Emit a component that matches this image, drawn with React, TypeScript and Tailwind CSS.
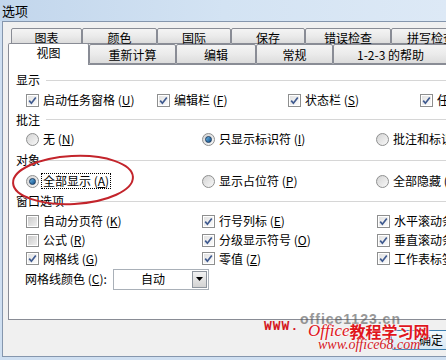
import React from 'react';

const font = "font-['Noto_Sans_CJK_SC',sans-serif]";

const Check = ({ checked }: { checked: boolean }) => (
  <span className="w-[13px] h-[13px] border border-[#8e8f8f] bg-white flex items-center justify-center shrink-0">
    <span
      className={
        checked
          ? 'w-[9px] h-[9px] bg-gradient-to-br from-[#e2e2e2] to-[#fbfbfb] flex items-center justify-center'
          : 'w-[9px] h-[9px] bg-gradient-to-br from-[#cbcbcb] to-[#efefef]'
      }
    >
      {checked && (
        <svg width="9" height="9" viewBox="0 0 9 9">
          <path d="M1.2 4.6 L3.4 7.2 L7.8 1.4" stroke="#3f5a8f" strokeWidth="1.7" fill="none" />
        </svg>
      )}
    </span>
  </span>
);

const Radio = ({ checked }: { checked: boolean }) => (
  <span className="w-[13px] h-[13px] rounded-full border border-[#8e8f8f] bg-gradient-to-br from-[#d4d4d4] to-[#f8f8f8] flex items-center justify-center shrink-0">
    {checked && (
      <span className="w-[7px] h-[7px] rounded-full border border-[#1c3a5e] bg-gradient-to-br from-[#6fb8e6] to-[#0c4f8a]" />
    )}
  </span>
);

const Label = ({ text, k }: { text: string; k: string }) => (
  <span className="whitespace-nowrap">
    {text} (<span className="underline">{k}</span>)
  </span>
);

const Section = ({ title }: { title: string }) => (
  <div className="h-[20px] flex items-center pl-[7px]">
    <span className="text-black">{title}</span>
    <span className="flex-1 h-px bg-[#d6d6d6] ml-[6px]" />
  </div>
);

const Tab = ({ label, w, top }: { label: string; w: string; top?: boolean }) => (
  <div
    className={`${w} h-full shrink-0 border border-[#898c95] rounded-t-[2px] bg-gradient-to-b from-[#f4f4f4] via-[#ebebeb] to-[#dcdcdc] flex items-center justify-center text-black whitespace-nowrap ${top ? 'pt-[3px]' : 'pt-[1px]'}`}
  >
    {label}
  </div>
);

const Cell = ({ w, children }: { w?: string; children: React.ReactNode }) => (
  <div className={`${w ?? ''} shrink-0 flex items-center gap-[4px]`}>{children}</div>
);

export default function App() {
  return (
    <div className={`relative w-[446px] h-[360px] overflow-hidden bg-[#cfdff1] text-[12px] leading-none ${font}`}>
      <div className="h-[21px] flex items-center pl-[2px] text-[13px] text-black bg-gradient-to-r from-[#c2d6ec] via-[#d3e3f3] to-[#dde9f6]">
        选项
      </div>

      <div className="ml-[2px] h-[336px] border-l border-t border-b border-[#8596ad] bg-[#f0f0f0] flex flex-col">
        <div className="pt-[6px] flex flex-col">
          <div className="flex h-[16px] ml-[8px]">
            <Tab top label="图表" w="w-[71px]" />
            <Tab top label="颜色" w="w-[75px]" />
            <Tab top label="国际" w="w-[74px]" />
            <Tab top label="保存" w="w-[74px]" />
            <Tab top label="错误检查" w="w-[86px]" />
            <Tab top label="拼写检查" w="w-[80px]" />
          </div>
          <div className="flex h-[20px] ml-[5px]">
            <div className="relative z-10 w-[81px] h-[22px] -mt-[1px] shrink-0 border-x border-t border-[#898c95] rounded-t-[2px] bg-white flex items-center justify-center pb-[3px] text-black">
              视图
            </div>
            <Tab label="重新计算" w="w-[87px]" />
            <Tab label="编辑" w="w-[80px]" />
            <Tab label="常规" w="w-[77px]" />
            <Tab label="1-2-3 的帮助" w="w-[115px]" />
          </div>
        </div>

        <div className="ml-[5px] w-[460px] h-[256px] border border-[#898c95] bg-white pt-[5px] flex flex-col text-black">
          <Section title="显示" />
          <div className="h-[20px] flex items-center pl-[17px]">
            <Cell w="w-[131px]"><Check checked /><Label text="启动任务窗格" k="U" /></Cell>
            <Cell w="w-[131px]"><Check checked /><Label text="编辑栏" k="F" /></Cell>
            <Cell w="w-[132px]"><Check checked /><Label text="状态栏" k="S" /></Cell>
            <Cell><Check checked /><Label text="任务栏中的窗口" k="W" /></Cell>
          </div>
          <div className="h-[19px] flex flex-col justify-center"><Section title="批注" /></div>
          <div className="h-[20px] flex items-center pl-[17px]">
            <Cell w="w-[176px]"><Radio checked={false} /><Label text="无" k="N" /></Cell>
            <Cell w="w-[174px]"><Radio checked /><Label text="只显示标识符" k="I" /></Cell>
            <Cell><Radio checked={false} /><Label text="批注和标识符" k="M" /></Cell>
          </div>
          <div className="h-[22px] flex flex-col justify-center"><Section title="对象" /></div>
          <div className="h-[20px] flex items-center pl-[17px]">
            <div className="w-[176px] shrink-0 flex items-center gap-[3px]">
              <Radio checked />
              <span className="outline-1 outline-dotted outline-black px-[1px] py-[1px]"><Label text="全部显示" k="A" /></span>
            </div>
            <Cell w="w-[174px]"><Radio checked={false} /><Label text="显示占位符" k="P" /></Cell>
            <Cell><Radio checked={false} /><Label text="全部隐藏" k="D" /></Cell>
          </div>
          <Section title="窗口选项" />
          <div className="h-[20px] flex items-center pl-[17px]">
            <Cell w="w-[176px]"><Check checked={false} /><Label text="自动分页符" k="K" /></Cell>
            <Cell w="w-[175px]"><Check checked /><Label text="行号列标" k="E" /></Cell>
            <Cell><Check checked /><Label text="水平滚动条" k="T" /></Cell>
          </div>
          <div className="h-[18px] flex items-center pl-[17px]">
            <Cell w="w-[176px]"><Check checked={false} /><Label text="公式" k="R" /></Cell>
            <Cell w="w-[175px]"><Check checked /><Label text="分级显示符号" k="O" /></Cell>
            <Cell><Check checked /><Label text="垂直滚动条" k="V" /></Cell>
          </div>
          <div className="h-[19px] flex items-center pl-[17px]">
            <Cell w="w-[176px]"><Check checked /><Label text="网格线" k="G" /></Cell>
            <Cell w="w-[175px]"><Check checked /><Label text="零值" k="Z" /></Cell>
            <Cell><Check checked /><Label text="工作表标签" k="B" /></Cell>
          </div>
          <div className="h-[22px] flex items-center pl-[16px]">
            <span className="w-[88px] shrink-0 whitespace-nowrap">网格线颜色 (<span className="underline">C</span>):</span>
            <div className="w-[96px] h-[21px] shrink-0 border border-[#a9b0b8] bg-white flex items-center">
              <span className="flex-1 text-center">自动</span>
              <span className="w-[15px] h-[17px] mr-[1px] border border-[#8e959e] bg-gradient-to-b from-[#f2f2f2] to-[#d3d3d3] flex items-center justify-center">
                <svg width="7" height="4" viewBox="0 0 7 4"><path d="M0 0 H7 L3.5 4 Z" fill="#000" /></svg>
              </span>
            </div>
          </div>
        </div>

        <div className="pt-[10px] pl-[388px]">
          <div className="w-[78px] h-[20px] border border-[#3c7fb1] rounded-[3px] bg-gradient-to-b from-[#f2f8fc] to-[#d8e8f4] flex items-center justify-center pl-[2px] text-black">
            确定
          </div>
        </div>
      </div>

      <svg className="absolute left-0 top-0 pointer-events-none" width="446" height="360">
        <ellipse cx="73" cy="180" rx="60" ry="24" transform="rotate(-3 73 180)" stroke="#c3242b" strokeWidth="2" fill="none" />
      </svg>

      <div className="absolute left-[300px] top-[312px] whitespace-nowrap text-[14px] font-bold text-[#555] font-['Liberation_Sans',sans-serif] tracking-[1px] opacity-60">
        office1123.cn
      </div>
      <div className="absolute left-[264px] top-[320px] whitespace-nowrap text-[13px] font-bold text-[#d4161d] font-['Liberation_Mono',monospace] tracking-[1px]">
        WWW.
      </div>
      <div className="absolute left-[308px] top-[322px] whitespace-nowrap flex items-end text-[#e0161d] [text-shadow:0_0_2px_#fff,0_0_2px_#fff]">
        <span className="italic font-['Liberation_Serif',serif] text-[17px] leading-none">Office</span>
        <span className="font-bold text-[16px] leading-none">教程学习网</span>
      </div>
      <div className="absolute left-[318px] top-[338px] whitespace-nowrap italic text-[14px] text-[#d4161d] font-['Liberation_Serif',serif] [text-shadow:0_0_2px_#fff]">
        www.office68.com
      </div>
    </div>
  );
}
